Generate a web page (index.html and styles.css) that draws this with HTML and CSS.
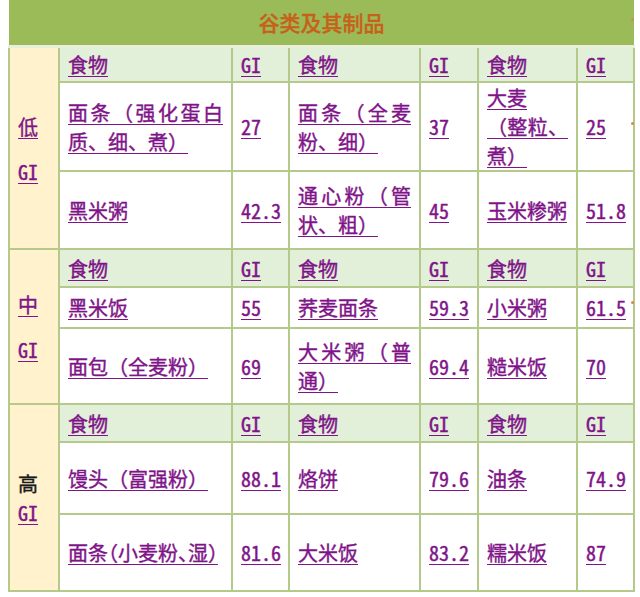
FILE: index.html
```html
<!DOCTYPE html>
<html lang="zh-CN">
<head>
<meta charset="utf-8">
<title>谷类及其制品</title>
<link rel="stylesheet" href="styles.css">
</head>
<body>
<div class="page">
<table class="gi">
  <colgroup>
    <col class="c-label"><col class="c-food1"><col class="c-gi"><col class="c-food2"><col class="c-gi2"><col class="c-food3"><col class="c-gi">
  </colgroup>
  <tr class="title-row"><th colspan="7" class="title">谷类及其制品</th></tr>

  <tr class="r-h1 head">
    <td rowspan="3" class="label label-low"><a class="lk lk-cn">低</a><a class="lk num">GI</a></td>
    <td><a class="lk">食物</a></td><td><a class="lk num">GI</a></td>
    <td><a class="lk">食物</a></td><td><a class="lk num">GI</a></td>
    <td><a class="lk">食物</a></td><td><a class="lk num">GI</a></td>
  </tr>
  <tr class="r-89">
    <td class="food"><a class="lk">面条（强化蛋白质、细、煮）</a></td><td><a class="lk num">27</a></td>
    <td class="food"><a class="lk">面条（全麦粉、细）</a></td><td><a class="lk num">37</a></td>
    <td class="food"><a class="lk">大麦<br>（整粒、煮）</a></td><td><a class="lk num">25</a></td>
  </tr>
  <tr class="r-78">
    <td class="food"><a class="lk">黑米粥</a></td><td><a class="lk num">42.3</a></td>
    <td class="food"><a class="lk">通心粉（管状、粗）</a></td><td><a class="lk num">45</a></td>
    <td class="food"><a class="lk">玉米糁粥</a></td><td><a class="lk num">51.8</a></td>
  </tr>

  <tr class="r-h2 head">
    <td rowspan="3" class="label label-mid"><a class="lk lk-cn">中</a><a class="lk num">GI</a></td>
    <td><a class="lk">食物</a></td><td><a class="lk num">GI</a></td>
    <td><a class="lk">食物</a></td><td><a class="lk num">GI</a></td>
    <td><a class="lk">食物</a></td><td><a class="lk num">GI</a></td>
  </tr>
  <tr class="r-41">
    <td class="food"><a class="lk">黑米饭</a></td><td><a class="lk num">55</a></td>
    <td class="food"><a class="lk">荞麦面条</a></td><td><a class="lk num">59.3</a></td>
    <td class="food"><a class="lk">小米粥</a></td><td><a class="lk num">61.5</a></td>
  </tr>
  <tr class="r-76">
    <td class="food"><a class="lk">面包（全麦粉）</a></td><td><a class="lk num">69</a></td>
    <td class="food"><a class="lk">大米粥（普通）</a></td><td><a class="lk num">69.4</a></td>
    <td class="food"><a class="lk">糙米饭</a></td><td><a class="lk num">70</a></td>
  </tr>

  <tr class="r-h2 head">
    <td rowspan="3" class="label label-high"><span class="plain">高</span><a class="lk num">GI</a></td>
    <td><a class="lk">食物</a></td><td><a class="lk num">GI</a></td>
    <td><a class="lk">食物</a></td><td><a class="lk num">GI</a></td>
    <td><a class="lk">食物</a></td><td><a class="lk num">GI</a></td>
  </tr>
  <tr class="r-72">
    <td class="food"><a class="lk">馒头（富强粉）</a></td><td><a class="lk num">88.1</a></td>
    <td class="food"><a class="lk">烙饼</a></td><td><a class="lk num">79.6</a></td>
    <td class="food"><a class="lk">油条</a></td><td><a class="lk num">74.9</a></td>
  </tr>
  <tr class="r-77">
    <td class="food"><a class="lk halt">面条（小麦粉、湿）</a></td><td><a class="lk num">81.6</a></td>
    <td class="food"><a class="lk">大米饭</a></td><td><a class="lk num">83.2</a></td>
    <td class="food"><a class="lk">糯米饭</a></td><td><a class="lk num">87</a></td>
  </tr>
</table>
<span class="dot d1"></span><span class="dot d2"></span><span class="dot d3"></span>
</div>
</body>
</html>
```
FILE: styles.css
```css
html, body {
  margin: 0;
  padding: 0;
  background: #ffffff;
}
.page {
  position: relative;
  width: 640px;
  height: 597px;
}
.gi {
  margin-left: 8px;
  width: 625px;
  table-layout: fixed;
  border-collapse: collapse;
  font-family: "Noto Sans CJK SC", "Noto Sans", sans-serif;
  font-size: 20px;
  line-height: 29px;
}
.c-label { width: 50px; }
.c-food1 { width: 173px; }
.c-gi { width: 57px; }
.c-food2 { width: 131px; }
.c-gi2 { width: 58px; }
.c-food3 { width: 99px; }

.gi td {
  border: 2px solid #b4c98a;
  padding: 0 8px;
  vertical-align: middle;
  background: #ffffff;
  text-align: left;
}
.title-row { height: 46px; }
.title {
  background: #9bbb59;
  color: #c7611a;
  font-weight: 500;
  font-size: 21px;
  text-align: center;
  padding: 0;
  border: none;
  border-bottom: 3px solid #e8efdb;
  -webkit-text-stroke: 0.35px #c7611a;
}
.gi .head td { background: #e2efd9; }
.gi td.label {
  background: #fff2cc;
  padding: 0 8px;
}
.gi td.food { text-align: justify; }

.r-h1 { height: 36px; }
.r-89 { height: 89px; }
.r-78 { height: 78px; }
.r-h2 { height: 38px; }
.r-41 { height: 41px; }
.r-76 { height: 76px; }
.r-72 { height: 72px; }
.r-77 { height: 77px; }

.lk {
  color: #7f1489;
  text-decoration: underline;
  text-decoration-thickness: 1px;
  text-underline-offset: 3px;
  -webkit-text-stroke: 0.4px #7f1489;
}
.num {
  font-feature-settings: "hwid" 1;
  white-space: nowrap;
}
.halt {
  font-feature-settings: "halt" 1;
}
.label .lk, .label .plain {
  display: block;
}
.label-low .lk-cn, .label-mid .lk-cn { margin-bottom: 16px; }
.label-low { padding-top: 2px !important; }
.plain {
  color: #1a1a1a;
  -webkit-text-stroke: 0.4px #1a1a1a;
}

.dot {
  position: absolute;
  left: 631px;
  width: 3px;
  height: 3px;
  border-radius: 50%;
  background: #d08a5a;
}
.d1 { top: 18px; }
.d2 { top: 122px; }
.d3 { top: 301px; }
```
